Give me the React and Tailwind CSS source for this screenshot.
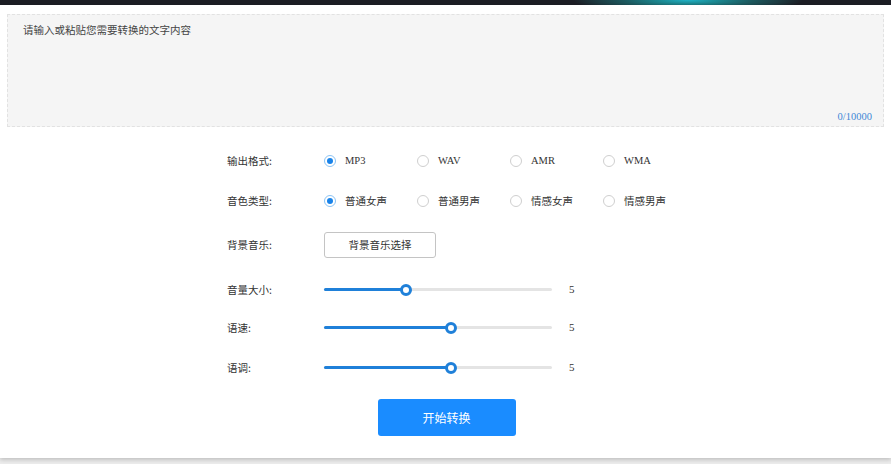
const cjk = { fontFamily: '"Noto Sans CJK SC", "Liberation Sans", sans-serif' };
const serif = { fontFamily: '"Liberation Serif", "Noto Sans CJK SC", serif' };

function Radio({ label, checked, latin }) {
  return (
    <label className="flex w-[93px] items-center gap-[9px]">
      <span
        className={
          "flex h-[12px] w-[12px] items-center justify-center rounded-full border " +
          (checked ? "border-[#8cc4f5] bg-white" : "border-[#cfcfcf] bg-white")
        }
      >
        {checked && <span className="h-[6px] w-[6px] rounded-full bg-[#1a83e8]" />}
      </span>
      <span className="text-[10.5px] text-[#333]" style={latin ? serif : cjk}>
        {label}
      </span>
    </label>
  );
}

function Row({ label, children }) {
  return (
    <div className="flex items-center">
      <div className="w-[97px] text-[10.5px] text-[#333]" style={cjk}>
        {label}
      </div>
      {children}
    </div>
  );
}

function Slider({ value }) {
  return (
    <div className="flex items-center">
      <div className="relative h-[3px] w-[228px] rounded-full bg-[#e4e4e4]">
        <div className="h-full rounded-full bg-[#1f80d9]" style={{ width: value + "%" }} />
        <div
          className="absolute top-1/2 h-[12px] w-[12px] -translate-x-1/2 -translate-y-1/2 rounded-full border-[3px] border-[#1f80d9] bg-white"
          style={{ left: value + "%" }}
        />
      </div>
      <span className="ml-[17px] text-[11px] text-[#333]" style={serif}>
        5
      </span>
    </div>
  );
}

export default function App() {
  return (
    <div className="h-[464px] overflow-hidden bg-[#ececec]">
      <div className="h-[5px] bg-[#1c1d24] bg-[radial-gradient(ellipse_115px_14px_at_688px_0px,#1fb2c6_0%,#1b8a93_25%,#1c5a5f_55%,#1d3a40_80%,#1c1d24_100%)]" />
      <div className="bg-white pb-[22px] shadow-[0_2px_4px_rgba(0,0,0,0.18)]">
        <div className="px-[7px] pt-[9px]">
          <div className="relative h-[113px] border border-dashed border-[#e2e2e2] bg-[#f5f5f5] px-[15px] pt-[7px]">
            <div className="text-[10.5px] text-[#444]" style={cjk}>
              请输入或粘贴您需要转换的文字内容
            </div>
            <div className="absolute bottom-[1px] right-[11px] text-[10.5px] text-[#3f88d6]" style={serif}>
              0/10000
            </div>
          </div>
        </div>

        <div className="mx-auto mt-[26px] flex w-[437px] flex-col">
          <div className="flex h-[15px] items-center">
            <Row label="输出格式:">
              <div className="flex">
                <Radio label="MP3" checked latin />
                <Radio label="WAV" latin />
                <Radio label="AMR" latin />
                <Radio label="WMA" latin />
              </div>
            </Row>
          </div>
          <div className="mt-[25px] flex h-[15px] items-center">
            <Row label="音色类型:">
              <div className="flex">
                <Radio label="普通女声" checked />
                <Radio label="普通男声" />
                <Radio label="情感女声" />
                <Radio label="情感男声" />
              </div>
            </Row>
          </div>
          <div className="mt-[24px]">
            <Row label="背景音乐:">
              <button
                className="h-[26px] w-[112px] rounded-[3px] border border-[#c4c4c4] bg-white text-[10.5px] text-[#333]"
                style={cjk}
              >
                背景音乐选择
              </button>
            </Row>
          </div>
          <div className="mt-[25px] flex h-[13px] items-center">
            <Row label="音量大小:">
              <Slider value={36} />
            </Row>
          </div>
          <div className="mt-[25px] flex h-[13px] items-center">
            <Row label="语速:">
              <Slider value={55.7} />
            </Row>
          </div>
          <div className="mt-[27px] flex h-[13px] items-center">
            <Row label="语调:">
              <Slider value={55.7} />
            </Row>
          </div>
        </div>

        <div className="mt-[25px] flex justify-center pl-[2px]">
          <button
            className="h-[37px] w-[138px] rounded-[3px] bg-[#1a8cff] text-[12px] text-white"
            style={cjk}
          >
            开始转换
          </button>
        </div>
      </div>
    </div>
  );
}
